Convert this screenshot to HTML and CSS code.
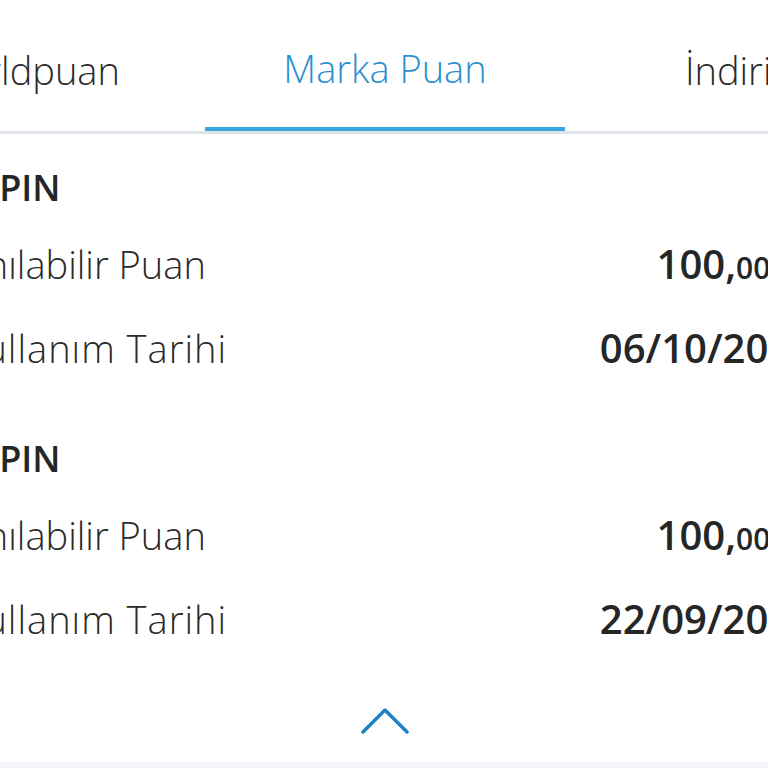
FILE: index.html
```html
<!DOCTYPE html>
<html lang="tr">
<head>
<meta charset="utf-8">
<link rel="stylesheet" href="styles.css">
</head>
<body>
<div class="screen">
  <nav class="tabs">
    <div class="tab">Worldpuan</div>
    <div class="tab active">Marka Puan</div>
    <div class="tab">İndirim</div>
  </nav>
  <div class="list">
    <section class="section">
      <div class="title">WEB PIN</div>
      <div class="row"><span class="label">Kullanılabilir Puan</span><span class="value">100,<small>00</small> <small>TL</small></span></div>
      <div class="row"><span class="label date">Son Kullanım Tarihi</span><span class="value">06/10/2021</span></div>
    </section>
    <section class="section">
      <div class="title">WEB PIN</div>
      <div class="row"><span class="label">Kullanılabilir Puan</span><span class="value">100,<small>00</small> <small>TL</small></span></div>
      <div class="row"><span class="label date">Son Kullanım Tarihi</span><span class="value">22/09/2021</span></div>
    </section>
  </div>
  <div class="more">
    <svg class="chevron" width="48" height="26" viewBox="0 0 48 26"><polyline points="2,24 24,2 46,24" fill="none" stroke="#1f80c4" stroke-width="3.5" stroke-linecap="round" stroke-linejoin="round"/></svg>
  </div>
  <div class="strip"></div>
</div>
</body>
</html>
```
FILE: styles.css
```css
html, body {
  margin: 0;
  padding: 0;
  background: #ffffff;
}
body {
  font-family: "Open Sans", "DejaVu Sans", sans-serif;
  color: #2a2a2a;
  overflow: hidden;
}
.screen {
  width: 768px;
  height: 768px;
  overflow: hidden;
  display: flex;
  flex-direction: column;
}
.tabs {
  display: grid;
  grid-template-columns: repeat(3, 360px);
  margin-left: -155px;
  width: 1080px;
  border-bottom: 3px solid #dfe3ea;
  flex: none;
}
.tab {
  height: 131px;
  box-sizing: border-box;
  padding-top: 8px;
  display: flex;
  align-items: center;
  justify-content: center;
  font-size: 38px;
  font-weight: 300;
  color: #2a2a2a;
}
.tab.active {
  color: #2b8fcf;
  border-bottom: 4px solid #37a7e0;
}
.list {
  margin-left: -96px;
  width: 910px;
  padding-top: 30px;
  flex: none;
}
.section + .section {
  margin-top: 63px;
}
.title {
  font-size: 36px;
  font-weight: 600;
  line-height: 48px;
  height: 48px;
  padding-left: 8px;
  margin-bottom: 28px;
  color: #262626;
}
.row {
  display: flex;
  justify-content: space-between;
  align-items: baseline;
  line-height: 48px;
  height: 48px;
}
.row + .row {
  margin-top: 36px;
}
.label {
  font-size: 38px;
  font-weight: 300;
  color: #2a2a2a;
}
.label.date {
  margin-left: -22px;
  letter-spacing: 1px;
}
.value {
  font-size: 40px;
  font-weight: 600;
  color: #262626;
}
.value small {
  font-size: 30px;
}
.more {
  flex: none;
  display: flex;
  justify-content: center;
  padding-top: 65px;
  padding-bottom: 28px;
  padding-left: 2px;
}
.chevron {
  display: block;
}
.strip {
  flex: 1;
  background: #f3f4f8;
}
```
